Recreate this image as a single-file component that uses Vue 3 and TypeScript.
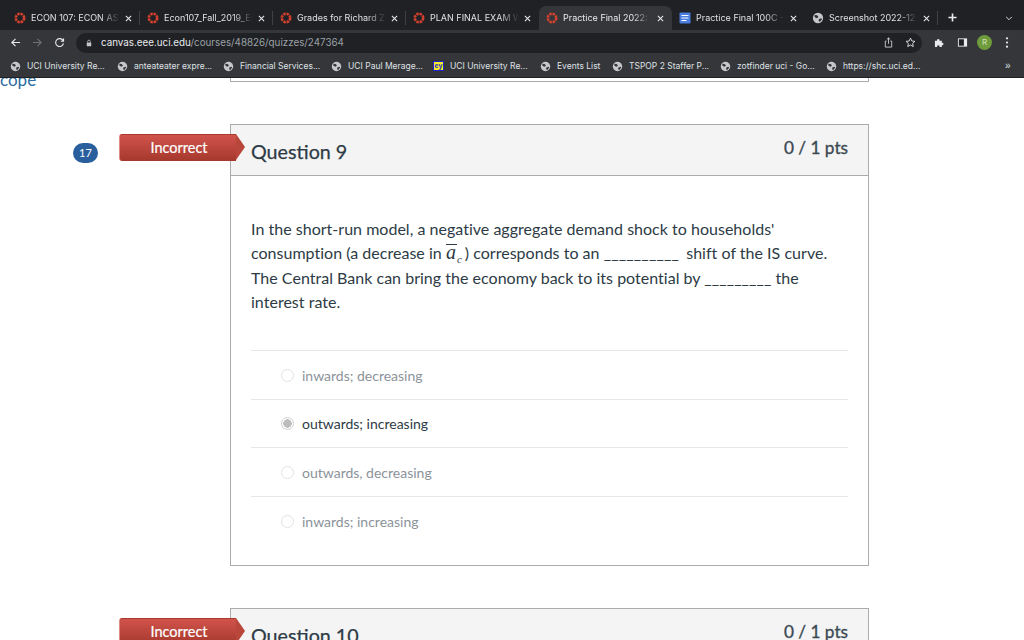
<script setup lang="ts">
interface Tab { title: string; icon: 'canvas' | 'docs' | 'globe'; active?: boolean }
const tabs: Tab[] = [
  { title: 'ECON 107: ECON ASYNC', icon: 'canvas' },
  { title: 'Econ107_Fall_2019_Exam', icon: 'canvas' },
  { title: 'Grades for Richard Zhang', icon: 'canvas' },
  { title: 'PLAN FINAL EXAM WEEK', icon: 'canvas' },
  { title: 'Practice Final 2022: Econ', icon: 'canvas', active: true },
  { title: 'Practice Final 100C - Google', icon: 'docs' },
  { title: 'Screenshot 2022-12-06', icon: 'globe' },
]
const bookmarks = [
  { title: 'UCI University Re...', w: 107 },
  { title: 'anteateater expre...', w: 106 },
  { title: 'Financial Services...', w: 108 },
  { title: 'UCI Paul Merage...', w: 102 },
  { title: 'UCI University Re...', w: 107, yellow: true },
  { title: 'Events List', w: 72 },
  { title: 'TSPOP 2 Staffer P...', w: 108 },
  { title: 'zotfinder uci - Go...', w: 106 },
  { title: 'https://shc.uci.ed...', w: 100 },
]
const answers = [
  { text: 'inwards; decreasing', picked: false },
  { text: 'outwards; increasing', picked: true },
  { text: 'outwards, decreasing', picked: false },
  { text: 'inwards; increasing', picked: false },
]
</script>

<template>
  <div class="screen">
    <div class="tabstrip">
      <div v-for="(t, i) in tabs" :key="i" class="tab" :class="{ active: t.active, sep: !t.active && i !== 3 && i !== 5 }">
        <svg v-if="t.icon === 'canvas'" class="fav" viewBox="0 0 12 12">
          <circle cx="6" cy="6" r="4.200" fill="none" stroke="#d4412e" stroke-width="2.600" stroke-dasharray="2.500 .8" />
        </svg>
        <svg v-else-if="t.icon === 'docs'" class="fav" viewBox="0 0 12 12">
          <rect x=".5" y=".5" width="11" height="11" rx="1" fill="#4a7de0" />
          <path d="M2.500 3.500h7M2.500 6h7M2.500 8.500h5" stroke="#fff" stroke-width="1.100" />
        </svg>
        <svg v-else class="fav" viewBox="0 0 14 14">
          <circle cx="7" cy="7" r="6" fill="#c5c7ca" />
          <path d="M3 3.400l3 .4 1.600 2-1.900 1.600-2.600-1.400zM8 8.200l2.800-.9.9 1.100-2.400 3-1.400-.6z" fill="#2d2f33" />
        </svg>
        <span class="tab-title">{{ t.title }}</span>
        <svg class="close" viewBox="0 0 8 8"><path d="M1 1l6 6M7 1L1 7" stroke="#e8eaed" stroke-width="1.2" /></svg>
      </div>
      <svg class="plus" viewBox="0 0 10 10"><path d="M5 .5v9M.5 5h9" stroke="#e8eaed" stroke-width="1.8" /></svg>
      <svg class="chev" viewBox="0 0 10 6"><path d="M1.500 1L5 4.500 8.500 1" fill="none" stroke="#dfe1e5" stroke-width="1.2" /></svg>
    </div>

    <div class="toolbar">
      <svg class="nav first" viewBox="0 0 12 12"><path d="M11 6H2M6 2L2 6l4 4" fill="none" stroke="#e8eaed" stroke-width="1.2" /></svg>
      <svg class="nav" viewBox="0 0 12 12"><path d="M1 6h9M6 2l4 4-4 4" fill="none" stroke="#6f7276" stroke-width="1.2" /></svg>
      <svg class="nav" viewBox="0 0 12 12"><path d="M10 4.200A4.300 4.300 0 1 0 10.300 7M10.400 1.600v3h-3" fill="none" stroke="#e8eaed" stroke-width="1.2" /></svg>
      <div class="omnibox">
        <svg class="lock" viewBox="0 0 8 10"><path d="M2.200 4.500V3a1.800 1.800 0 0 1 3.600 0v1.500" fill="none" stroke="#c4c6c9" /><rect x="1" y="4.300" width="6" height="5" rx=".7" fill="#c4c6c9" /></svg>
        <span class="url"><b>canvas.eee.uci.edu</b>/courses/48826/quizzes/247364</span>
        <svg class="omni-icon share" viewBox="0 0 12 12"><path d="M4 4.500H2.500v6.500h7V4.500H8M6 7.500V1M4.200 2.700L6 1l1.800 1.700" fill="none" stroke="#c9cbce" /></svg>
        <svg class="omni-icon star" viewBox="0 0 12 12"><path d="M6 1.200l1.450 3.150 3.400.4-2.500 2.300.66 3.400L6 8.750l-3 1.700.66-3.400-2.500-2.300 3.400-.4z" fill="none" stroke="#e0e2e5" /></svg>
      </div>
      <svg class="tool puzzle" viewBox="0 0 12 12"><path d="M1 4h2.300a1.400 1.400 0 1 1 2.700 0h2.500v2.300a1.400 1.400 0 1 1 0 2.700V11H6a1.400 1.400 0 1 0-2.500 0H1z" fill="#e8eaed" /></svg>
      <svg class="tool panel" viewBox="0 0 12 12"><rect x="1" y="1.500" width="10" height="9" fill="#e8eaed" /><rect x="2" y="2.500" width="5.500" height="7" fill="#202124" /></svg>
      <div class="avatar">R</div>
      <svg class="tool menu" viewBox="0 0 4 14"><circle cx="2" cy="2.500" r="1.200" fill="#e8eaed" /><circle cx="2" cy="7" r="1.200" fill="#e8eaed" /><circle cx="2" cy="11.500" r="1.200" fill="#e8eaed" /></svg>
    </div>

    <div class="bookmarks">
      <div v-for="(b, i) in bookmarks" :key="i" class="bm" :style="{ width: b.w + 'px' }">
        <span v-if="b.yellow" class="ev">ey</span>
        <svg v-else class="bm-ico" viewBox="0 0 14 14">
          <circle cx="7" cy="7" r="6" fill="#c5c7ca" />
          <path d="M3 3.400l3 .4 1.600 2-1.900 1.600-2.600-1.400zM8 8.200l2.800-.9.9 1.100-2.400 3-1.400-.6z" fill="#35363a" />
        </svg>
        <span>{{ b.title }}</span>
      </div>
      <span class="more">»</span>
    </div>

    <main class="page">
      <div class="stub">
        <span class="scope">cope</span>
        <div class="stub-card"></div>
      </div>

      <section class="question">
        <div class="side">
          <span class="count">17</span>
          <span class="flag">Incorrect</span>
        </div>
        <article class="card">
          <header class="card-head">
            <h2>Question 9</h2>
            <span class="pts">0 / 1 pts</span>
          </header>
          <div class="card-body">
            <p>
              In the short-run model, a negative aggregate demand shock to households'<br />
              consumption (a decrease in <span class="math"><i class="bar">a</i><sub>c</sub></span>) corresponds to an <span class="blank">__________</span> shift of the IS curve.<br />
              The Central Bank can bring the economy back to its potential by <span class="blank2">_________</span> the<br />
              interest rate.
            </p>
            <ul class="answers">
              <li v-for="a in answers" :key="a.text" :class="{ picked: a.picked }">
                <span class="radio"></span>{{ a.text }}
              </li>
            </ul>
          </div>
        </article>
      </section>

      <section class="question">
        <div class="side">
          <span class="flag">Incorrect</span>
        </div>
        <article class="card">
          <header class="card-head">
            <h2>Question 10</h2>
            <span class="pts">0 / 1 pts</span>
          </header>
        </article>
      </section>
    </main>
  </div>
</template>

<style>
html, body { margin: 0; background: #fff; }
</style>

<style scoped>
.screen { width: 1024px; height: 640px; overflow: hidden; display: flex; flex-direction: column; font-family: Lato, "Noto Sans", sans-serif; }

.tabstrip { height: 30px; background: #202124; display: flex; align-items: flex-end; padding-left: 7px; flex: none; box-sizing: border-box; padding-top: 6px; }
.tab { width: 133px; height: 24px; box-sizing: border-box; display: flex; align-items: center; padding: 0 8px 0 7px; position: relative; color: #dfe1e5; border-radius: 7px 7px 0 0; flex: none; }
.tab.sep::after { content: ""; position: absolute; right: 0; top: 5px; height: 14px; width: 1px; background: #3f4145; }
.tab.active { background: #35363a; color: #e8eaed; }
.fav { width: 12px; height: 12px; flex: none; margin-right: 5px; }
.tab-title { flex: 1; font: 9px/12px Inter, "Liberation Sans", sans-serif; white-space: nowrap; overflow: hidden; min-width: 0; -webkit-mask-image: linear-gradient(90deg, #000 78%, transparent 100%); mask-image: linear-gradient(90deg, #000 78%, transparent 100%); }
.close { width: 7px; height: 7px; flex: none; margin-left: 5px; }
.plus { width: 9px; height: 9px; margin: 0 0 8px 10px; flex: none; }
.chev { width: 8px; height: 5px; margin: 0 0 9px 48px; flex: none; }

.toolbar { height: 25px; background: #35363a; display: flex; align-items: center; flex: none; }
.nav { width: 11px; height: 11px; margin-left: 11px; flex: none; }
.nav.first { margin-left: 10px; }
.omnibox { margin-left: 11px; width: 846px; height: 20px; border-radius: 10px; background: #202124; display: flex; align-items: center; padding: 0 6px 0 10px; box-sizing: border-box; flex: none; }
.lock { width: 6px; height: 8px; flex: none; margin-right: 9px; }
.url { font: 9.800px/12px Inter, "Liberation Sans", sans-serif; color: #9aa0a6; flex: 1; white-space: nowrap; }
.url b { font-weight: 400; color: #e8eaed; }
.omni-icon { width: 11px; height: 11px; flex: none; }
.star { margin-left: 11px; }
.tool { flex: none; }
.puzzle { width: 11px; height: 11px; margin-left: 12px; }
.panel { width: 11px; height: 11px; margin-left: 12px; }
.avatar { width: 15px; height: 15px; border-radius: 50%; background: #6f9b3c; color: #cfe0b8; font: 8px/15px Inter, sans-serif; text-align: center; margin-left: 9px; flex: none; }
.menu { width: 4px; height: 13px; margin-left: 13px; }

.bookmarks { height: 23px; background: #35363a; display: flex; align-items: center; padding-left: 10px; border-bottom: 1px solid #1f2023; box-sizing: border-box; position: relative; flex: none; }
.bm { display: flex; align-items: center; font: 8.500px/12px Inter, "Liberation Sans", sans-serif; color: #dfe1e5; white-space: nowrap; flex: none; }
.bm-ico { width: 11px; height: 11px; margin-right: 6px; flex: none; }
.ev { width: 11px; height: 10px; box-sizing: border-box; background: #f4ee2a; border: 1px solid #1f24c8; color: #1f24c8; font: 700 7px/8px "Liberation Sans", sans-serif; text-align: center; margin-right: 6px; flex: none; }
.more { position: absolute; left: 1005px; top: 5px; font: 10px/12px "Liberation Sans", sans-serif; color: #dfe1e5; }

.page { flex: 1; min-height: 0; overflow: hidden; display: flex; flex-direction: column; background: #fff; color: #2d3b45; }
.stub { height: 4px; position: relative; display: flex; flex: none; padding-left: 230px; }
.stub-card { width: 639px; height: 4px; box-sizing: border-box; border: 1px solid #a9acae; border-top: 0; }
.scope { position: absolute; left: 0; top: -6px; font-size: 17px; line-height: 16px; color: #2d6ca2; }

.question { display: flex; flex: none; margin-top: 42px; }
.side { width: 230px; flex: none; position: relative; }
.count { position: absolute; left: 73px; top: 19px; width: 25px; height: 20px; border-radius: 10px; background: #2a5f9e; color: #fff; font-size: 11px; line-height: 20px; text-align: center; }
.flag { position: absolute; left: 119px; top: 10px; width: 117px; height: 27px; box-sizing: border-box; background: linear-gradient(#d2544d, #a5382c); border-radius: 3px 0 0 3px; border-left: 1px solid #e08a84; box-shadow: inset 0 1px 0 #a83a30; color: #fff; font-size: 14.500px; line-height: 28px; text-align: center; padding-left: 2px; z-index: 1; -webkit-text-stroke: .2px #fff; }
.flag::after { content: ""; position: absolute; left: 116px; top: 0; border-left: 9px solid #b8463a; border-top: 13.500px solid transparent; border-bottom: 13.500px solid transparent; }

.card { width: 639px; flex: none; box-sizing: border-box; border: 1px solid #a9acae; }
.card-head { height: 51px; box-sizing: border-box; background: #f4f4f4; border-bottom: 1px solid #a9acae; display: flex; justify-content: space-between; padding: 0 20px; flex: none; }
h2 { margin: 14px 0 0; font-size: 19.700px; line-height: 26px; font-weight: 400; color: #2d3b45; -webkit-text-stroke: .25px #2d3b45; }
.pts { margin-top: 12px; font-size: 17.200px; line-height: 22px; color: #3c4a54; font-weight: 400; -webkit-text-stroke: .35px #3c4a54; }
.card-body { padding: 41px 20px 20px; height: 389px; box-sizing: border-box; }
p { margin: 0 0 36px; font-size: 16px; line-height: 24px; color: #2d3b45; white-space: nowrap; letter-spacing: .02px; }
.blank { letter-spacing: .2px; margin-right: 3px; }
.blank2 { letter-spacing: .1px; }
.math { font-family: "Liberation Serif", serif; }
.bar { border-top: 1px solid #2d3b45; line-height: 14px; display: inline-block; font-size: 20px; padding-right: 1px; }
sub { font-size: 11px; font-style: italic; line-height: 0; margin-right: 3px; }
.answers { list-style: none; margin: 0; padding: 0; }
li { height: 48.700px; box-sizing: border-box; border-top: 1px solid #e6e6e6; display: flex; align-items: center; padding: .4px 0 0 30px; font-size: 14px; color: #8b939a; }
li.picked { color: #2d3b45; }
.radio { width: 13px; height: 13px; border-radius: 50%; border: 1px solid #e2e2e2; box-sizing: border-box; margin-right: 8px; background: #fff; flex: none; }
.picked .radio { border-color: #cfcfcf; background: radial-gradient(circle, #bdbdbd 0 4px, #fff 4.500px); }
</style>
